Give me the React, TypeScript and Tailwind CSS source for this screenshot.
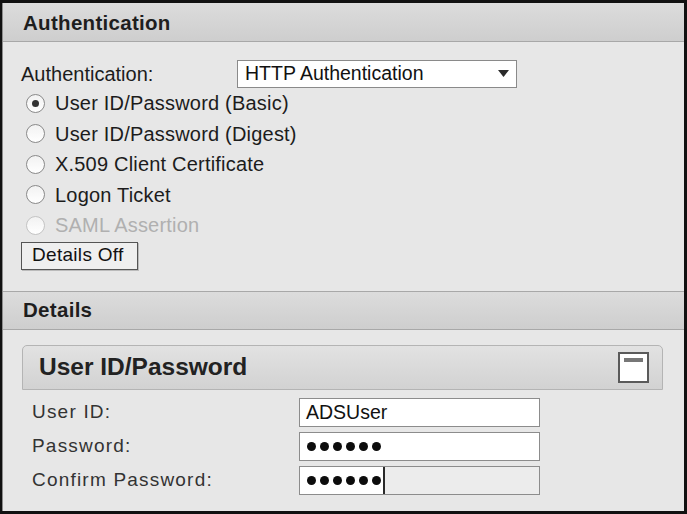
import React from 'react';

const font = { fontFamily: '"Liberation Sans", Arial, sans-serif' };

const Radio = ({ label, checked = false, disabled = false }: { label: string; checked?: boolean; disabled?: boolean }) => (
  <div className="flex h-[30.5px] items-center pl-[23px]">
    <span
      className={`flex h-[19px] w-[19px] items-center justify-center rounded-full border-[1.5px] bg-gradient-to-b from-[#f2f2f2] to-[#ffffff] ${
        disabled ? 'border-[#c4c4c4]' : 'border-[#8a8a8a]'
      }`}
    >
      {checked && <span className="h-[7px] w-[7px] rounded-full bg-[#333]" />}
    </span>
    <span className={`ml-[10px] text-[20px] tracking-[0.2px] ${disabled ? 'text-[#b0b0b0]' : 'text-[#1c1c1c]'}`}>{label}</span>
  </div>
);

const SectionHeader = ({ title, top = false }: { title: string; top?: boolean }) => (
  <div
    className={`flex h-[39px] items-center border-b border-[#a8a8a8] bg-gradient-to-b from-[#dcdcdc] to-[#cecece] pl-[20px] ${
      top ? 'pt-[2px]' : 'border-t'
    }`}
  >
    <span className="text-[20.5px] font-bold tracking-[0.3px] text-[#1e1e1e]">{title}</span>
  </div>
);

const Dots = () => (
  <div className="flex gap-[4px]">
    {[0, 1, 2, 3, 4, 5].map((i) => (
      <span key={i} className="h-[9px] w-[9px] rounded-full bg-[#0c0c0c]" />
    ))}
  </div>
);

const FormRow = ({ label, children }: { label: string; children: React.ReactNode }) => (
  <div className="flex h-[29px] items-center">
    <span className="w-[296px] pl-[29px] text-[19px] tracking-[1.2px] text-[#333]">{label}</span>
    {children}
  </div>
);

export default function App() {
  return (
    <div className="h-[514px] w-[687px] bg-[#111] pb-[3px] pl-[2px] pr-[3px] pt-[3px]" style={font}>
      <div className="flex h-full flex-col border-l border-[#8c8c8c] bg-[#e7e7e7]">
        <SectionHeader title="Authentication" top />

        <div className="flex h-[249px] flex-col pt-[18px]">
          <div className="flex h-[28px] items-center">
            <span className="w-[234px] pl-[18px] text-[20px] text-[#1c1c1c]">Authentication:</span>
            <div className="flex h-[28px] w-[280px] items-center justify-between border border-[#8a8a8a] bg-white pl-[7px] pr-[7px]">
              <span className="text-[19.5px] text-[#111]">HTTP Authentication</span>
              <svg width="11" height="8" viewBox="0 0 11 8">
                <path d="M0 0 L11 0 L5.5 7 Z" fill="#2a2a2a" />
              </svg>
            </div>
          </div>

          <div className="flex flex-col">
            <Radio label="User ID/Password (Basic)" checked />
            <Radio label="User ID/Password (Digest)" />
            <Radio label="X.509 Client Certificate" />
            <Radio label="Logon Ticket" />
            <Radio label="SAML Assertion" disabled />
          </div>

          <div className="pl-[18px] pt-[1px]">
            <button className="flex h-[28px] w-[117px] items-center border border-[#555] bg-[#efefef] pl-[10px] text-[19px] tracking-[0.3px] text-[#111] shadow-[1px_1px_0_#bbb]">
              Details Off
            </button>
          </div>
        </div>

        <SectionHeader title="Details" />

        <div className="flex flex-1 flex-col pl-[19px] pr-[21px] pt-[15px]">
          <div className="flex h-[45px] items-center justify-between rounded-t-[5px] border border-[#b4b4b4] bg-gradient-to-b from-[#e2e2e2] to-[#d2d2d2] pl-[16px] pr-[13px]">
            <span className="text-[24.5px] font-bold text-[#222]">User ID/Password</span>
            <div className="flex h-[31px] w-[31px] justify-center border-2 border-[#5a5a5a] bg-white pt-[4px]">
              <span className="h-[4px] w-[19px] bg-[#777]" />
            </div>
          </div>

          <div className="-ml-[19px] flex flex-col gap-[5px] pt-[8px]">
            <FormRow label="User ID:">
              <div className="flex h-[29px] w-[241px] items-center border border-[#8c8c8c] bg-white pl-[6px] text-[19.5px] text-[#111]">
                ADSUser
              </div>
            </FormRow>
            <FormRow label="Password:">
              <div className="flex h-[29px] w-[241px] items-center border border-[#8c8c8c] bg-white pl-[7px]">
                <Dots />
              </div>
            </FormRow>
            <FormRow label="Confirm Password:">
              <div className="flex h-[29px] w-[241px] items-stretch border border-[#8c8c8c] bg-[#ececec]">
                <div className="flex w-[85px] items-center border-r-2 border-[#2a2a2a] bg-white pl-[7px]">
                  <Dots />
                </div>
              </div>
            </FormRow>
          </div>
        </div>
      </div>
    </div>
  );
}
